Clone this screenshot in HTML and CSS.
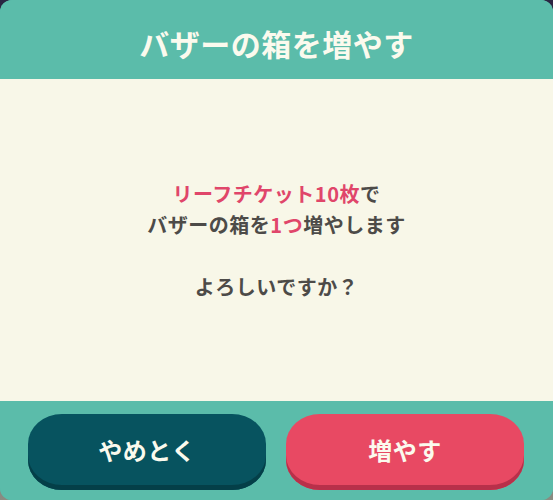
FILE: index.html
```html
<!DOCTYPE html>
<html lang="ja">
<head>
<meta charset="utf-8">
<link rel="stylesheet" href="styles.css">
</head>
<body>
<div class="dialog">
  <div class="header"><h1 class="title">バザーの箱を増やす</h1></div>
  <div class="content">
    <p class="msg"><span class="hl">リーフチケット10枚</span>で<br>バザーの箱を<span class="hl">1つ</span>増やします</p>
    <p class="msg ask">よろしいですか？</p>
  </div>
  <div class="footer">
    <button class="btn btn-cancel">やめとく</button>
    <button class="btn btn-ok">増やす</button>
  </div>
</div>
</body>
</html>
```
FILE: styles.css
```css
html, body {
  margin: 0;
  padding: 0;
  width: 553px;
  height: 500px;
  overflow: hidden;
}
body {
  background: linear-gradient(180deg, #2a2542 0%, #3a3a50 50%, #8a8c82 100%);
  font-family: "Noto Sans CJK JP", "Noto Sans", sans-serif;
}
.dialog {
  width: 553px;
  height: 500px;
  display: flex;
  flex-direction: column;
  border-radius: 12px;
  overflow: hidden;
  background: #5bbcaa;
}
.header {
  height: 79px;
  display: flex;
  align-items: center;
  justify-content: center;
  background: #5bbcaa;
}
.title {
  margin: 7px 0 0 0;
  font-size: 30px;
  font-weight: 700;
  color: #fbfaee;
  letter-spacing: 0.5px;
}
.content {
  height: 322px;
  background: #f8f7e8;
  display: flex;
  flex-direction: column;
  align-items: center;
  padding-top: 99px;
  box-sizing: border-box;
}
.msg {
  margin: 0;
  text-align: center;
  font-size: 20px;
  font-weight: 700;
  line-height: 31px;
  color: #4d4b48;
  letter-spacing: 0.5px;
}
.ask {
  margin-top: 31px;
}
.hl {
  color: #e0466a;
}
.footer {
  flex: 1;
  display: flex;
  gap: 20px;
  padding: 13px 0 0 28px;
  background: #5bbcaa;
}
.btn {
  width: 238px;
  height: 76px;
  border: none;
  border-radius: 34px / 30px;
  font-family: "Noto Sans CJK JP", "Noto Sans", sans-serif;
  font-size: 24px;
  font-weight: 700;
  color: #fbfaee;
  padding: 0 0 6px 0;
  letter-spacing: 0.5px;
}
.btn-cancel {
  background: #07535f;
  box-shadow: inset 0 -5px 0 #043f48;
}
.btn-ok {
  background: #e84963;
  box-shadow: inset 0 -5px 0 #b8304a;
}
```
